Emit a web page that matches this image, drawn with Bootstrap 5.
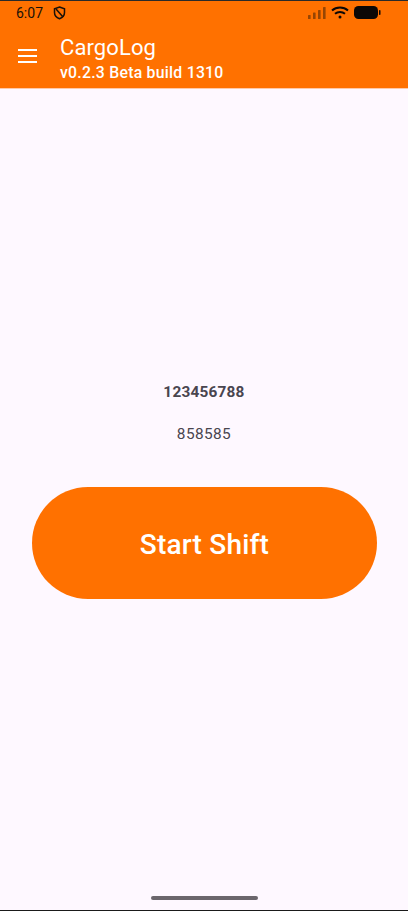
<!DOCTYPE html>
<html lang="en">
<head>
<meta charset="utf-8">
<title>CargoLog</title>
<link rel="stylesheet" href="https://cdn.jsdelivr.net/npm/bootstrap@5.3.0/dist/css/bootstrap.min.css">
<style>
html,body{height:100%;margin:0;overflow:hidden}
body{font-family:Roboto,"Liberation Sans",sans-serif;background:#fef8ff;color:#49454f}
.screen{height:911px;border-top:1px solid #2a2a2a;border-bottom:1px solid #1a1a1a}
.head-bar{background:#ff7100;border-bottom:1px solid #ffc9a8;height:88px;color:#fff}
.status-row{height:23px;padding:0 27px 0 16px;color:#1a1208;font-size:14px;line-height:23px}
.status-time{padding-top:1px}
.status-row svg{display:block}
.status-left{gap:10px}
.status-right{gap:5px}
.title-row{padding-left:18px;height:64px}
.menu-btn{background:none;border:0;padding:0;width:19px;height:14px;margin-right:23px;display:block}
.menu-btn svg{display:block}
.name-block{margin-top:4px}
.app-name{font-size:22px;line-height:26px;letter-spacing:.1px;color:#fff}
.app-ver{font-size:15.8px;line-height:18px;font-weight:500;letter-spacing:.25px;color:#fff;margin-top:3px}
.main-area{padding-top:293px}
.id-bold{font-size:15.4px;line-height:20px;font-weight:700;letter-spacing:.2px}
.id-plain{font-size:15.4px;line-height:20px;margin-top:22px;letter-spacing:.4px}
.start-btn{display:block;width:345px;height:112px;margin:43px 0 0 32px;background:#ff7100;border:0;border-radius:56px;color:#fff;font-size:28px;font-weight:500;letter-spacing:.2px;padding:3px 0 0}
.start-btn:hover,.start-btn:focus{background:#ff7100;color:#fff}
.home-bar{width:107px;height:4px;background:#6b666c;border-radius:2px;margin:0 auto 10px}
</style>
</head>
<body>
<div class="screen d-flex flex-column">
  <header class="head-bar flex-shrink-0">
    <div class="status-row d-flex align-items-center justify-content-between">
      <div class="status-left d-flex align-items-center">
        <span class="status-time">6:07</span>
        <svg width="13" height="14" viewBox="0 0 13 14" fill="none" stroke="#1a1208" stroke-width="1.5"><path d="M6.500 1 L11.500 2.800 V6.500 C11.500 9.500 9.500 11.700 6.500 12.800 C3.500 11.700 1.500 9.500 1.500 6.500 V2.800 Z"/><path d="M3 3 L10 11"/></svg>
      </div>
      <div class="status-right d-flex align-items-center">
        <svg width="18" height="12" viewBox="0 0 18 12" fill="#1a1208" opacity=".45"><rect x="0" y="8" width="2.600" height="4" rx=".6"/><rect x="5" y="5.500" width="2.600" height="6.500" rx=".6"/><rect x="10" y="3" width="2.600" height="9" rx=".6"/><rect x="15" y="0" width="2.600" height="12" rx=".6"/></svg>
        <svg width="18" height="13" viewBox="0 0 18 13" fill="none" stroke="#0c0806" stroke-width="2"><path d="M1 4.500 C5.500 .5 12.500 .5 17 4.500"/><path d="M4 7.800 C6.800 5.400 11.200 5.400 14 7.800"/><circle cx="9" cy="11" r="1.500" fill="#0c0806" stroke="none"/></svg>
        <svg width="27" height="13" viewBox="0 0 27 13" fill="#0c0806"><rect x="0" y="0" width="24" height="13" rx="4.500"/><rect x="25" y="4" width="1.500" height="5" rx=".7"/></svg>
      </div>
    </div>
    <div class="title-row d-flex align-items-center">
      <button class="menu-btn" type="button" aria-label="Menu">
        <svg width="19" height="14" viewBox="0 0 19 14" fill="#fff"><rect x="0" y="0" width="19" height="2"/><rect x="0" y="6" width="19" height="2"/><rect x="0" y="12" width="19" height="2"/></svg>
      </button>
      <div class="name-block">
        <div class="app-name">CargoLog</div>
        <div class="app-ver">v0.2.3 Beta build 1310</div>
      </div>
    </div>
  </header>
  <main class="main-area flex-grow-1 text-center">
    <div class="id-bold">123456788</div>
    <div class="id-plain">858585</div>
    <button class="btn start-btn" type="button">Start Shift</button>
  </main>
  <div class="home-bar flex-shrink-0"></div>
</div>
<script src="https://cdn.jsdelivr.net/npm/bootstrap@5.3.0/dist/js/bootstrap.bundle.min.js"></script>
</body>
</html>
